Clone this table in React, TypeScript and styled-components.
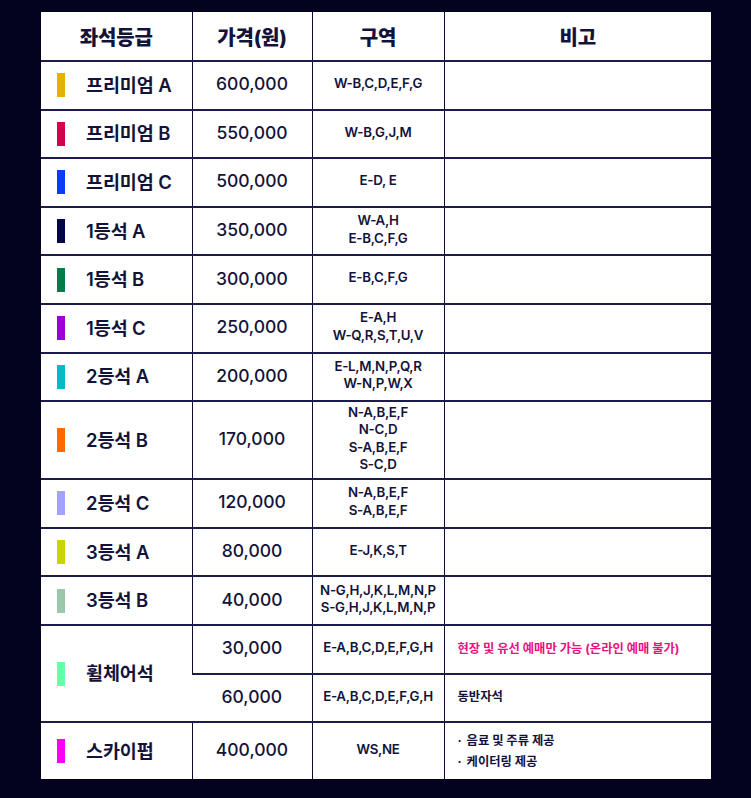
import React from 'react'
import styled, { createGlobalStyle } from 'styled-components'

const GlobalStyle = createGlobalStyle`
    html, body {
        margin: 0;
        padding: 0;
        background: #03031f;
    }
    body {
        font-family: Inter, "Noto Sans CJK KR", sans-serif;
        color: #13133a;
    }
`

const Page = styled.div`
    min-height: 798px;
    padding: 12px 0 0 41px;
    box-sizing: border-box;
`

const Table = styled.table`
    width: 670px;
    border-collapse: collapse;
    table-layout: fixed;
    background: #fff;
`

const HeadCell = styled.th`
    height: 48px;
    font-size: 20px;
    font-weight: 800;
    text-align: center;
    letter-spacing: -0.2px;
    border-left: 1px solid #0b0b33;
    border-bottom: 2px solid #1c1c4a;
    padding: 0;
    &:first-child {
        border-left: none;
    }
`

const Row = styled.tr<{ $h: number }>`
    height: ${p => p.$h}px;
`

const Cell = styled.td`
    border-left: 1px solid #0b0b33;
    border-bottom: 2px solid #1c1c4a;
    padding: 0 0 3px 0;
    text-align: center;
    vertical-align: middle;
    &:first-child {
        border-left: none;
    }
`

const GradeCell = styled(Cell)`
    text-align: left;
    border-left: none;
`

const Grade = styled.div`
    display: flex;
    align-items: center;
    gap: 21px;
    padding-left: 16px;
    font-size: 18.5px;
    font-weight: 600;
    letter-spacing: -0.1px;
`

const Swatch = styled.span<{ $color: string }>`
    display: block;
    width: 8px;
    height: 24px;
    margin-top: 3px;
    background: ${p => p.$color};
`

const Price = styled(Cell)`
    font-size: 17.5px;
    font-weight: 500;
`

const Zone = styled(Cell)`
    font-size: 13.3px;
    font-weight: 600;
    line-height: 17.5px;
    letter-spacing: -0.3px;
`

const Note = styled(Cell)<{ $accent?: boolean }>`
    text-align: left;
    padding-left: 13px;
    font-size: 12.3px;
    font-weight: 700;
    color: ${p => (p.$accent ? '#e8117f' : '#13133a')};
`

const NoteList = styled.ul`
    list-style: none;
    margin: 0;
    padding: 3px 0 0 0;
    line-height: 21px;
    li::before {
        content: '·';
        margin-right: 5px;
    }
`

type Seat = {
    name: string
    color: string
    price: string
    zones: string[]
    h: number
}

const seats: Seat[] = [
    { name: '프리미엄 A', color: '#e2b400', price: '600,000', zones: ['W-B,C,D,E,F,G'], h: 48.6 },
    { name: '프리미엄 B', color: '#d4004e', price: '550,000', zones: ['W-B,G,J,M'], h: 48.6 },
    { name: '프리미엄 C', color: '#0a3cff', price: '500,000', zones: ['E-D, E'], h: 48.6 },
    { name: '1등석 A', color: '#05054a', price: '350,000', zones: ['W-A,H', 'E-B,C,F,G'], h: 48.6 },
    { name: '1등석 B', color: '#097a4c', price: '300,000', zones: ['E-B,C,F,G'], h: 48.6 },
    { name: '1등석 C', color: '#9a00d2', price: '250,000', zones: ['E-A,H', 'W-Q,R,S,T,U,V'], h: 48.6 },
    { name: '2등석 A', color: '#00bcc6', price: '200,000', zones: ['E-L,M,N,P,Q,R', 'W-N,P,W,X'], h: 48.6 },
    { name: '2등석 B', color: '#ff6a00', price: '170,000', zones: ['N-A,B,E,F', 'N-C,D', 'S-A,B,E,F', 'S-C,D'], h: 78 },
    { name: '2등석 C', color: '#a3a3ff', price: '120,000', zones: ['N-A,B,E,F', 'S-A,B,E,F'], h: 48.6 },
    { name: '3등석 A', color: '#c9d400', price: '80,000', zones: ['E-J,K,S,T'], h: 48.6 },
    { name: '3등석 B', color: '#99c9a8', price: '40,000', zones: ['N-G,H,J,K,L,M,N,P', 'S-G,H,J,K,L,M,N,P'], h: 48.6 },
]

function Zones({ lines }: { lines: string[] }) {
    return (
        <>
            {lines.map((l, i) => (
                <div key={i}>{l}</div>
            ))}
        </>
    )
}

export default function App() {
    return (
        <Page>
            <GlobalStyle />
            <Table>
                <colgroup>
                    <col style={{ width: 151 }} />
                    <col style={{ width: 120 }} />
                    <col style={{ width: 132 }} />
                    <col style={{ width: 267 }} />
                </colgroup>
                <thead>
                    <tr>
                        <HeadCell>좌석등급</HeadCell>
                        <HeadCell>가격(원)</HeadCell>
                        <HeadCell>구역</HeadCell>
                        <HeadCell>비고</HeadCell>
                    </tr>
                </thead>
                <tbody>
                    {seats.map(s => (
                        <Row key={s.name} $h={s.h}>
                            <GradeCell>
                                <Grade>
                                    <Swatch $color={s.color} />
                                    {s.name}
                                </Grade>
                            </GradeCell>
                            <Price>{s.price}</Price>
                            <Zone><Zones lines={s.zones} /></Zone>
                            <Note />
                        </Row>
                    ))}
                    <Row $h={48.6}>
                        <GradeCell rowSpan={2}>
                            <Grade>
                                <Swatch $color='#66ffa8' />
                                휠체어석
                            </Grade>
                        </GradeCell>
                        <Price>30,000</Price>
                        <Zone>E-A,B,C,D,E,F,G,H</Zone>
                        <Note $accent>현장 및 유선 예매만 가능 (온라인 예매 불가)</Note>
                    </Row>
                    <Row $h={48.6}>
                        <Price>60,000</Price>
                        <Zone>E-A,B,C,D,E,F,G,H</Zone>
                        <Note>동반자석</Note>
                    </Row>
                    <Row $h={57}>
                        <GradeCell style={{ borderBottom: 'none' }}>
                            <Grade>
                                <Swatch $color='#ff00f0' />
                                스카이펍
                            </Grade>
                        </GradeCell>
                        <Price style={{ borderBottom: 'none' }}>400,000</Price>
                        <Zone style={{ borderBottom: 'none' }}>WS,NE</Zone>
                        <Note style={{ borderBottom: 'none' }}>
                            <NoteList>
                                <li>음료 및 주류 제공</li>
                                <li>케이터링 제공</li>
                            </NoteList>
                        </Note>
                    </Row>
                </tbody>
            </Table>
        </Page>
    )
}
